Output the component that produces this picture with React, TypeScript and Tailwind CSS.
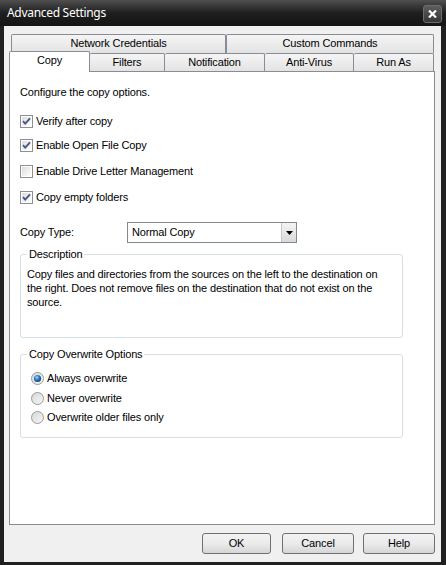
import React from "react";

const ui = "font-['Liberation_Sans',Arial,sans-serif] text-[11px] leading-[13px] tracking-[-0.15px] text-black";

function CheckBox({ checked }: { checked: boolean }) {
  return (
    <svg width="13" height="13" viewBox="0 0 13 13" className="shrink-0">
      <defs>
        <linearGradient id="cbg" x1="0" y1="0" x2="1" y2="1">
          <stop offset="0" stopColor="#dcdcdc" />
          <stop offset="1" stopColor="#ffffff" />
        </linearGradient>
      </defs>
      <rect x="0.5" y="0.5" width="12" height="12" fill="#fff" stroke="#8e8f8f" />
      <rect x="2" y="2" width="9" height="9" fill="url(#cbg)" />
      {checked && (
        <path d="M3 6.2 L5.2 8.6 L10 3.4" fill="none" stroke="#44578a" strokeWidth="1.9" />
      )}
    </svg>
  );
}

function Radio({ checked }: { checked: boolean }) {
  return (
    <svg width="13" height="13" viewBox="0 0 13 13" className="shrink-0">
      <defs>
        <linearGradient id="rbg" x1="0" y1="0" x2="1" y2="1">
          <stop offset="0" stopColor="#d6d6d6" />
          <stop offset="1" stopColor="#f8f8f8" />
        </linearGradient>
        <radialGradient id="rdot" cx="0.4" cy="0.35" r="0.7">
          <stop offset="0" stopColor="#a9d8f8" />
          <stop offset="0.5" stopColor="#2a79c0" />
          <stop offset="1" stopColor="#0d3a6e" />
        </radialGradient>
      </defs>
      <circle cx="6.5" cy="6.5" r="6" fill="url(#rbg)" stroke="#9a9a9a" />
      {checked && <circle cx="6.5" cy="6.5" r="3.6" fill="url(#rdot)" />}
    </svg>
  );
}

function Button({ label, w }: { label: string; w: string }) {
  return (
    <button
      className={`${w} h-[21px] rounded-[3px] border border-[#707070] bg-gradient-to-b from-[#f2f2f2] via-[#ebebeb] to-[#d6d6d6] ${ui}`}
    >
      {label}
    </button>
  );
}

export default function App() {
  return (
    <div className="w-[446px] h-[565px] flex flex-col overflow-hidden bg-[#202020]">
      {/* title bar */}
      <div className="h-[26px] shrink-0 flex items-center justify-between pl-[7px] pr-[3px] bg-gradient-to-b from-[#505050] via-[#1f1f1f] to-[#141414]">
        <span className="font-['Noto_Sans',sans-serif] text-[12px] tracking-[-0.3px] text-white">Advanced Settings</span>
        <div className="mt-[2px] mr-px w-[19px] h-[18px] rounded-[3px] border border-[#6d6d6d] bg-gradient-to-b from-[#5e5e5e] to-[#363636] flex items-center justify-center">
          <svg width="9" height="8" viewBox="0 0 9 8">
            <path d="M1 0.5 L8 7.5 M8 0.5 L1 7.5" stroke="#fff" strokeWidth="2.2" />
          </svg>
        </div>
      </div>

      {/* client */}
      <div className={`flex-1 ml-[4px] mr-[5px] mb-[3px] bg-[#f0f0f0] flex flex-col pl-[5px] pr-[6px] pt-[8px] ${ui}`}>
        {/* back tab row */}
        <div className="flex ml-[2px] h-[19px]">
          <div className="w-[215px] h-[19px] rounded-t-[2px] border border-b-0 border-[#898c95] bg-gradient-to-b from-[#f5f5f5] to-[#e3e3e3] flex justify-center pt-[2px]">
            Network Credentials
          </div>
          <div className="w-[208px] h-[19px] rounded-t-[2px] border border-b-0 border-[#898c95] bg-gradient-to-b from-[#f5f5f5] to-[#e3e3e3] flex justify-center pt-[2px]">
            Custom Commands
          </div>
        </div>
        {/* front tab row */}
        <div className="flex items-end h-[20px] -mt-[2px]">
          <div className="relative z-10 -mb-px w-[81px] h-[21px] rounded-t-[2px] border border-b-0 border-[#898c95] bg-white flex justify-center pt-[2px]">
            Copy
          </div>
          {[
            ["Filters", "w-[75px]"],
            ["Notification", "w-[100px]"],
            ["Anti-Virus", "w-[89px]"],
            ["Run As", "w-[80px]"],
          ].map(([t, w]) => (
            <div
              key={t}
              className={`${w} h-[18px] rounded-t-[2px] border border-b-0 border-l-0 border-[#898c95] bg-gradient-to-b from-[#f5f5f5] to-[#e3e3e3] flex justify-center pt-[2px]`}
            >
              {t}
            </div>
          ))}
        </div>

        {/* panel */}
        <div className="h-[454px] border border-[#898c95] bg-white flex flex-col pl-[10px] pt-[14px]">
          <div>Configure the copy options.</div>

          {[
            ["Verify after copy", true, "mt-[16px]"],
            ["Enable Open File Copy", true, "mt-[11px]"],
            ["Enable Drive Letter Management", false, "mt-[13px]"],
            ["Copy empty folders", true, "mt-[13px]"],
          ].map(([label, c, m]) => (
            <div key={label as string} className={`flex items-center gap-[3px] h-[13px] ${m}`}>
              <CheckBox checked={c as boolean} />
              <span>{label as string}</span>
            </div>
          ))}

          <div className="flex items-center mt-[18px] h-[21px]">
            <span className="w-[107px]">Copy Type:</span>
            <div className="w-[170px] h-[21px] border border-[#828790] bg-white flex items-center justify-between">
              <span className="pl-[4px]">Normal Copy</span>
              <div className="w-[15px] h-[19px] bg-gradient-to-b from-[#f4f4f4] to-[#d9d9d9] border-l border-[#c8c8c8] flex items-center justify-center">
                <svg width="7" height="4" viewBox="0 0 7 4">
                  <path d="M0 0 H7 L3.5 4 Z" fill="#000" />
                </svg>
              </div>
            </div>
          </div>

          <fieldset className="mt-[5px] w-[383px] border border-[#d5dfe5] rounded-[3px]">
            <legend className="ml-[6px] px-[2px]">Description</legend>
            <div className="pt-[6px] pl-[6px] h-[76px] leading-[14px] whitespace-nowrap">
              Copy files and directories from the sources on the left to the destination on
              <br />
              the right. Does not remove files on the destination that do not exist on the
              <br />
              source.
            </div>
          </fieldset>

          <fieldset className="mt-[10px] w-[383px] border border-[#d5dfe5] rounded-[3px]">
            <legend className="ml-[6px] px-[2px]">Copy Overwrite Options</legend>
            <div className="pt-[8px] pb-[9px] pl-[10px] flex flex-col">
              {[
                ["Always overwrite", true],
                ["Never overwrite", false],
                ["Overwrite older files only", false],
              ].map(([label, c]) => (
                <div key={label as string} className="flex items-center gap-[3px] h-[19.5px]">
                  <Radio checked={c as boolean} />
                  <span>{label as string}</span>
                </div>
              ))}
            </div>
          </fieldset>
        </div>

        {/* buttons */}
        <div className="flex justify-end mt-[8px]">
          <Button label="OK" w="w-[69px]" />
          <div className="w-[11px]" />
          <Button label="Cancel" w="w-[72px]" />
          <div className="w-[9px]" />
          <Button label="Help" w="w-[72px]" />
        </div>
      </div>
    </div>
  );
}
